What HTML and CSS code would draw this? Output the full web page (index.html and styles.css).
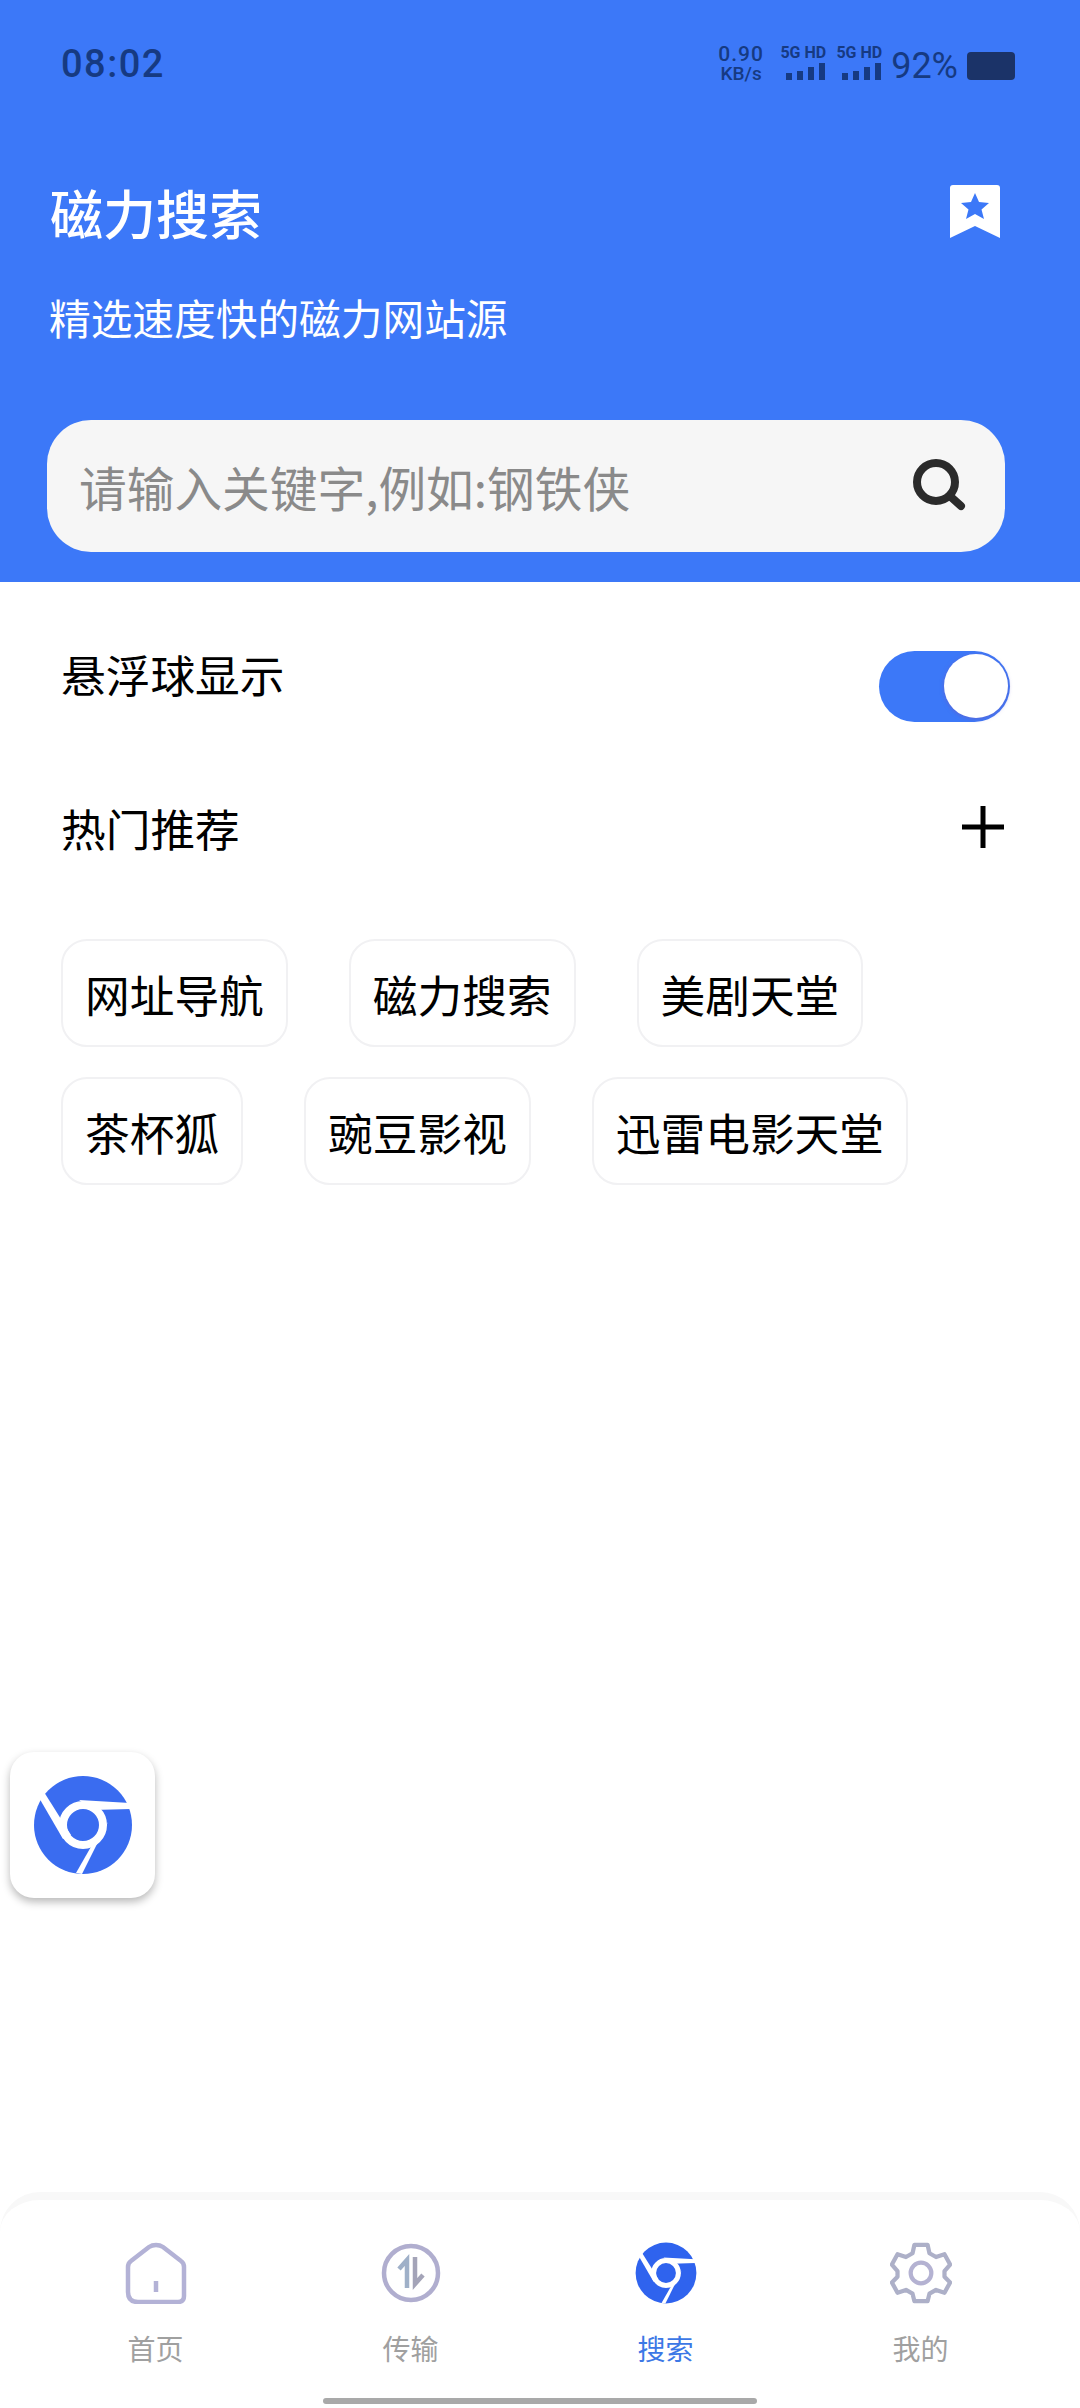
FILE: index.html
```html
<!DOCTYPE html>
<html lang="en">
<head>
    <meta charset="UTF-8">
    <meta name="viewport" content="width=device-width, initial-scale=1.0">
    <title>磁力搜索</title>
    <link rel="stylesheet" href="styles.css">
</head>
<body>
    <svg class="defs" width="0" height="0">
        <symbol id="chrome" viewBox="-50 -50 100 100">
            <circle r="49" fill="currentColor"/>
            <circle r="20" fill="none" stroke="#fff" stroke-width="8"/>
            <path d="M-45 -29 L-39 -33 L-12 10 L-20 14 Z" fill="#fff"/>
            <path d="M-4 -25 L47 -22 L48 -16 L10 -15 Z" fill="#fff"/>
            <path d="M25 -3 L-1 49 L-7 48 L13 13 Z" fill="#fff"/>
        </symbol>
    </svg>

    <div class="page">
        <header class="header">
            <div class="statusbar">
                <span class="time">08:02</span>
                <div class="status-right">
                    <div class="speed"><span>0.90</span><span class="speed-unit">KB/s</span></div>
                    <div class="signal">
                        <span class="signal-label">5G HD</span>
                        <svg width="40" height="17" viewBox="0 0 40 17"><path d="M0 10h6v7H0zM11 8h6v9h-6zM22 4h6v13h-6zM33 0h6v17h-6z" fill="#163a82"/></svg>
                    </div>
                    <div class="signal">
                        <span class="signal-label">5G HD</span>
                        <svg width="40" height="17" viewBox="0 0 40 17"><path d="M0 10h6v7H0zM11 8h6v9h-6zM22 4h6v13h-6zM33 0h6v17h-6z" fill="#163a82"/></svg>
                    </div>
                    <span class="battery-text">92%</span>
                    <div class="battery"></div>
                </div>
            </div>

            <div class="title-row">
                <h1 class="title">磁力搜索</h1>
                <svg class="bookmark" width="54" height="54" viewBox="0 0 54 54">
                    <path d="M2 3 Q2 0 5 0 H49 Q52 0 52 3 V53 L27 41 L2 53 Z" fill="#fff"/>
                    <path d="M27 8 L31 17 L41 18 L33.500 24.500 L36 34 L27 29 L18 34 L20.500 24.500 L13 18 L23 17 Z" fill="#3c78f8"/>
                </svg>
            </div>
            <p class="subtitle">精选速度快的磁力网站源</p>

            <div class="search">
                <span class="search-hint">请输入关键字,例如:钢铁侠</span>
                <svg class="search-icon" width="54" height="54" viewBox="0 0 54 54">
                    <circle cx="23" cy="23" r="19" fill="none" stroke="#2b2b2b" stroke-width="8"/>
                    <path d="M38 38 L48 47" stroke="#2b2b2b" stroke-width="8" stroke-linecap="round"/>
                </svg>
            </div>
        </header>

        <main class="main">
            <div class="row row-float">
                <span>悬浮球显示</span>
                <div class="toggle"><div class="toggle-circle"></div></div>
            </div>
            <div class="row row-hot">
                <span>热门推荐</span>
                <svg class="plus" width="42" height="42" viewBox="0 0 42 42"><path d="M0 21H42M21 0V42" stroke="#000" stroke-width="5"/></svg>
            </div>
            <div class="tags">
                <div class="tag-row">
                    <div class="tag">网址导航</div>
                    <div class="tag">磁力搜索</div>
                    <div class="tag">美剧天堂</div>
                </div>
                <div class="tag-row">
                    <div class="tag">茶杯狐</div>
                    <div class="tag">豌豆影视</div>
                    <div class="tag">迅雷电影天堂</div>
                </div>
            </div>
        </main>

        <nav class="nav">
            <div class="nav-item">
                <svg class="nav-icon" width="62" height="62" viewBox="0 0 62 62">
                    <path d="M31 3 Q27 3 24 5 L6 19 Q3 21 3 25 V50 Q3 60 13 60 H53 Q59 60 59 54 V25 Q59 21 56 19 L38 5 Q35 3 31 3 Z M31 39 V50" fill="none" stroke="#b3b2d6" stroke-width="4.500"/>
                </svg>
                <span>首页</span>
            </div>
            <div class="nav-item">
                <svg class="nav-icon" width="62" height="62" viewBox="0 0 62 62">
                    <circle cx="31" cy="31" r="27" fill="none" stroke="#b0aecf" stroke-width="4.500"/>
                    <path d="M27 46 V18 L19 27" fill="none" stroke="#9fb0c8" stroke-width="4.500"/>
                    <path d="M35 15 V42 L43 33" fill="none" stroke="#a4a4b8" stroke-width="4.500"/>
                </svg>
                <span>传输</span>
            </div>
            <div class="nav-item active">
                <svg class="nav-icon" width="62" height="62"><use href="#chrome"/></svg>
                <span>搜索</span>
            </div>
            <div class="nav-item">
                <svg class="nav-icon" width="62" height="62" viewBox="0 0 66 66">
                    <path d="M26 3 H40 L42 12 L49 16 L58 13 L64 24 L58 31 V37 L64 43 L58 54 L49 51 L42 55 L40 63 H26 L24 55 L17 51 L8 54 L2 43 L8 37 V31 L2 24 L8 13 L17 16 L24 12 Z" fill="none" stroke="#adb0c8" stroke-width="4.500" stroke-linejoin="round"/>
                    <circle cx="33" cy="33" r="11" fill="none" stroke="#b4b2d2" stroke-width="4.500"/>
                </svg>
                <span>我的</span>
            </div>
        </nav>

        <div class="float-ball">
            <svg width="100" height="100"><use href="#chrome"/></svg>
        </div>
        <div class="home-bar"></div>
    </div>
</body>
</html>
```

FILE: styles.css
```css
* {
    box-sizing: border-box;
}
body {
    margin: 0;
    background-color: white;
    font-family: "Noto Sans CJK SC", "Noto Sans", sans-serif;
    color: black;
}
.defs {
    position: absolute;
}
.page {
    width: 1080px;
    height: 2408px;
    position: relative;
    display: flex;
    flex-direction: column;
    overflow: hidden;
}

/* header */
.header {
    height: 582px;
    background-color: #3c78f8;
    color: white;
    padding: 0 75px 0 47px;
}
.statusbar {
    height: 178px;
    display: flex;
    justify-content: space-between;
    align-items: flex-start;
    margin-right: -10px;
    color: #163a82;
    font-family: Roboto, sans-serif;
}
.time {
    margin: 42px 0 0 14px;
    font-size: 38px;
    line-height: 44px;
    font-weight: 500;
    letter-spacing: 1.5px;
}
.status-right {
    display: flex;
    align-items: flex-start;
    padding-top: 45px;
}
.speed {
    width: 50px;
    display: flex;
    flex-direction: column;
    align-items: center;
    font-size: 21px;
    line-height: 19px;
    font-weight: 500;
    letter-spacing: 1px;
    margin-right: 10px;
}
.speed-unit {
    font-size: 19px;
    letter-spacing: 0;
}
.signal {
    width: 50px;
    display: flex;
    flex-direction: column;
    align-items: flex-end;
    margin-right: 6px;
}
.signal-label {
    font-size: 16px;
    line-height: 16px;
    font-weight: 700;
    white-space: nowrap;
    margin-bottom: 2px;
}
.battery-text {
    font-size: 36px;
    line-height: 42px;
    margin: 0 9px 0 3px;
}
.battery {
    width: 48px;
    height: 28px;
    margin-top: 7px;
    background-color: #1b3368;
    border-radius: 4px;
}
.title-row {
    display: flex;
    justify-content: space-between;
    align-items: center;
    height: 68px;
}
.title {
    margin: 0 0 0 3px;
    font-size: 53px;
    line-height: 68px;
    font-weight: 500;
}
.bookmark {
    margin-right: 3px;
}
.subtitle {
    margin: 43px 0 0 2px;
    font-size: 41.7px;
    line-height: 56px;
    font-weight: 400;
}
.search {
    width: 958px;
    height: 132px;
    margin-top: 75px;
    padding: 0 38px 0 32px;
    background-color: #f6f6f6;
    border-radius: 44px;
    display: flex;
    justify-content: space-between;
    align-items: center;
}
.search-hint {
    font-size: 47.7px;
    color: #8a8a8a;
}

/* main */
.main {
    flex: 1;
    padding: 0 70px 0 61px;
}
.row {
    display: flex;
    justify-content: space-between;
    align-items: center;
    font-size: 44.7px;
}
.row-float {
    height: 100px;
    margin-top: 41px;
}
.row-hot {
    height: 100px;
    margin-top: 54px;
    margin-right: 6px;
}
.toggle {
    width: 131px;
    height: 71px;
    margin-top: 26px;
    background-color: #3c78f8;
    border-radius: 36px;
    display: flex;
    justify-content: flex-end;
    align-items: center;
    padding-right: 2px;
}
.toggle-circle {
    width: 64px;
    height: 64px;
    background-color: white;
    border-radius: 50%;
    box-shadow: 0 1px 4px rgba(110, 90, 190, 0.6);
}
.tags {
    margin-top: 62px;
    display: flex;
    flex-direction: column;
    gap: 30px;
}
.tag-row {
    display: flex;
    gap: 61px;
}
.tag {
    height: 108px;
    padding: 0 22px;
    border: 2px solid #f1f1f3;
    border-radius: 26px;
    font-size: 44.7px;
    display: flex;
    align-items: center;
}

/* bottom bar */
.nav {
    height: 216px;
    border-top: 8px solid #f8f8f8;
    border-radius: 40px 40px 0 0;
    display: grid;
    grid-template-columns: repeat(4, 255px);
    padding-left: 28px;
    background-color: white;
}
.nav-item {
    display: flex;
    flex-direction: column;
    align-items: center;
    padding-top: 42px;
    font-size: 28px;
    color: #a0a0a0;
}
.nav-item span {
    margin-top: 24px;
}
.nav-item.active {
    color: #3c78e6;
}
.nav-icon {
    display: block;
}
.nav-item.active .nav-icon {
    color: #2f63ee;
}

/* things lying over the page */
.float-ball {
    position: absolute;
    left: 10px;
    top: 1752px;
    width: 145px;
    height: 146px;
    background-color: white;
    border-radius: 24px;
    box-shadow: 0 4px 8px rgba(0, 0, 0, 0.28);
    color: #3a6cf0;
    display: flex;
    justify-content: center;
    align-items: center;
}
.home-bar {
    position: absolute;
    left: 323px;
    top: 2398px;
    width: 434px;
    height: 6px;
    border-radius: 3px;
    background-color: #a9a9a9;
}
```
